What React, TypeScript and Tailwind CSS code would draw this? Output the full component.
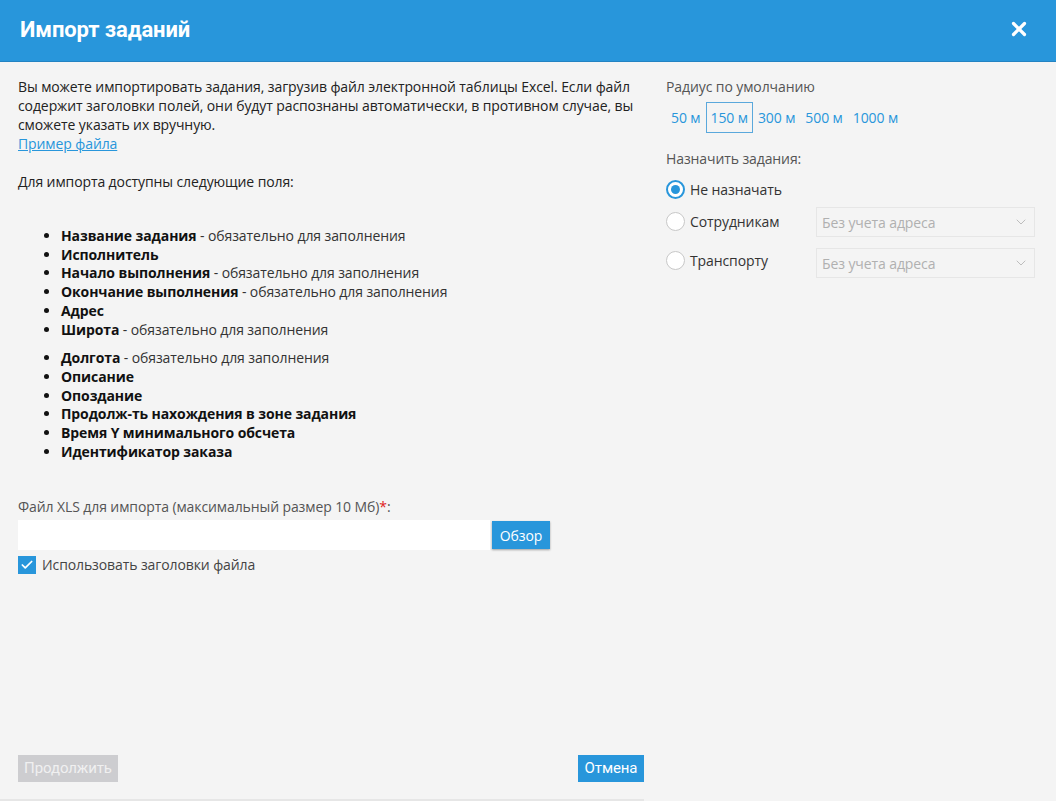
import { X, ChevronDown, Check } from "lucide-react";

const fields: { name: string; req?: boolean; gap?: boolean }[] = [
  { name: "Название задания", req: true },
  { name: "Исполнитель" },
  { name: "Начало выполнения", req: true },
  { name: "Окончание выполнения", req: true },
  { name: "Адрес" },
  { name: "Широта", req: true },
  { name: "Долгота", req: true, gap: true },
  { name: "Описание" },
  { name: "Опоздание" },
  { name: "Продолж-ть нахождения в зоне задания" },
  { name: "Время Y минимального обсчета" },
  { name: "Идентификатор заказа" },
];

const radii = ["50 м", "150 м", "300 м", "500 м", "1000 м"];

const Radio = ({ checked }: { checked?: boolean }) =>
  checked ? (
    <span className="flex h-[19px] w-[19px] items-center justify-center rounded-full border-2 border-[#2896db] bg-white">
      <span className="h-[9px] w-[9px] rounded-full bg-[#2896db]" />
    </span>
  ) : (
    <span className="h-[19px] w-[19px] rounded-full border border-[#c8c8c8] bg-white" />
  );

const Select = () => (
  <div className="flex h-[30px] w-[219px] items-center justify-between border border-[#e6e6e6] bg-[#f4f4f4] pl-[5px] pr-[5px] text-[14px] text-[#b0b0b0]">
    <span>Без учета адреса</span>
    <ChevronDown className="h-[16px] w-[16px] text-[#bdbdbd]" strokeWidth={1.5} />
  </div>
);

export default function App() {
  return (
    <div className="flex h-[801px] w-full flex-col bg-[#f4f4f4] font-['Open_Sans',sans-serif] text-[14px] tracking-[-0.1px] text-[#222]">
      <header className="flex h-[62px] shrink-0 items-center justify-between border-b border-[#2383c2] bg-[#2896db] pb-[3px] pl-[20px] pr-[26px]">
        <h1 className="font-['Roboto',sans-serif] text-[22px] font-bold tracking-[-0.1px] text-white">
          Импорт заданий
        </h1>
        <X className="h-[22px] w-[22px] text-white" strokeWidth={3.5} />
      </header>

      <main className="flex flex-1">
        <section className="w-[640px] pl-[18px] pt-[15px]">
          <p className="w-[622px] leading-[19px]">
            Вы можете импортировать задания, загрузив файл электронной таблицы Excel. Если файл содержит заголовки
            полей, они будут распознаны автоматически, в противном случае, вы сможете указать их вручную.
          </p>
          <a className="block leading-[19px] text-[#2896db] underline">Пример файла</a>
          <p className="mt-[19px] leading-[19px]">Для импорта доступны следующие поля:</p>

          <ul className="mt-[36px] list-disc pl-[43px] leading-[18.7px] text-[#111]">
            {fields.map((f) => (
              <li key={f.name} className={f.gap ? "mt-[10px]" : ""}>
                <b className="font-bold">{f.name}</b>
                {f.req && <span className="text-[#333]"> - обязательно для заполнения</span>}
              </li>
            ))}
          </ul>

          <label className="mt-[36px] block leading-[19px] text-[#555]">
            Файл XLS для импорта (максимальный размер 10 Мб)<span className="text-[#e02020]">*</span>:
          </label>
          <div className="mt-[4px] flex items-center">
            <div className="h-[30px] w-[472px] bg-white" />
            <button className="ml-[2px] h-[28px] w-[58px] bg-[#2896db] text-[14px] text-white shadow-[0_1px_2px_rgba(0,0,0,0.35)]">
              Обзор
            </button>
          </div>
          <div className="mt-[4px] flex items-center gap-[6px]">
            <span className="flex h-[18px] w-[18px] items-center justify-center bg-[#2896db]">
              <Check className="h-[14px] w-[14px] text-white" strokeWidth={3} />
            </span>
            <span className="text-[#444]">Использовать заголовки файла</span>
          </div>
        </section>

        <section className="ml-[26px] flex-1 pr-[21px] pt-[15px] text-[#555]">
          <div className="leading-[19px]">Радиус по умолчанию</div>
          <div className="mt-[6px] flex text-[#2896db]">
            {radii.map((r) => (
              <span
                key={r}
                className={
                  r === "150 м"
                    ? "flex h-[31px] items-center border border-[#5aa8dc] px-[4px]"
                    : "flex h-[31px] items-center border border-transparent px-[4px]"
                }
              >
                {r}
              </span>
            ))}
          </div>
          <div className="mt-[16px] leading-[19px]">Назначить задания:</div>
          <div className="mt-[10px] flex h-[22px] items-center gap-[5px] text-[#333]">
            <Radio checked />
            <span>Не назначать</span>
          </div>
          <div className="mt-[7px] flex items-center">
            <div className="flex w-[150px] items-center gap-[5px] self-start pt-[4px] text-[#333]">
              <Radio />
              <span>Сотрудникам</span>
            </div>
            <Select />
          </div>
          <div className="mt-[11px] flex items-center">
            <div className="flex w-[150px] items-center gap-[5px] self-start pt-[2px] text-[#333]">
              <Radio />
              <span>Транспорту</span>
            </div>
            <Select />
          </div>
        </section>
      </main>

      <footer className="flex w-[644px] shrink-0 justify-between border-b-2 border-[#e6e6e6] pb-[17px] pl-[18px] font-['Roboto',sans-serif] text-[15px]">
        <button className="h-[27px] w-[100px] bg-[#cdcdd0] text-[#f0f0f0]">Продолжить</button>
        <button className="h-[27px] w-[66px] bg-[#2896db] text-white">Отмена</button>
      </footer>
    </div>
  );
}
